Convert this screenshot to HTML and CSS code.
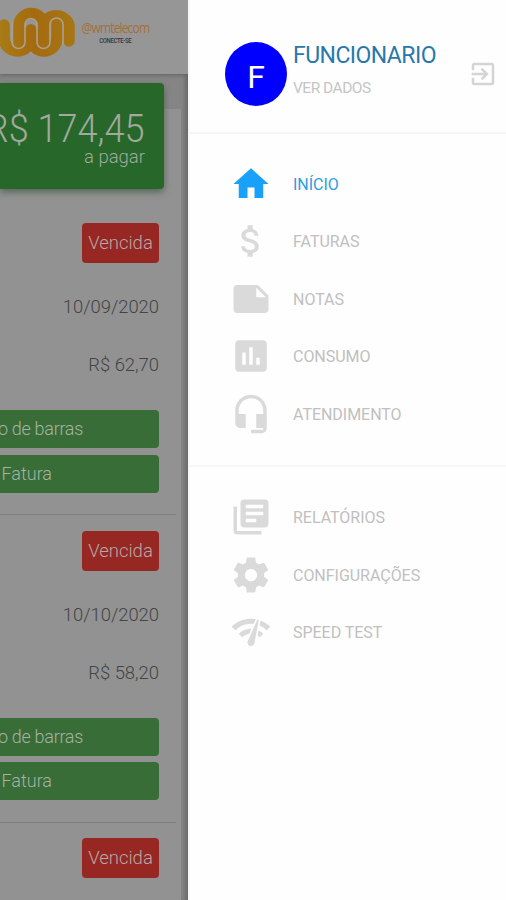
FILE: index.html
```
<!DOCTYPE html>
<html lang="pt-BR">
<head>
<meta charset="utf-8">
<meta name="viewport" content="width=device-width, initial-scale=1">
<title>Central do Assinante</title>
<link rel="stylesheet" href="styles.css">
</head>
<body>
<div class="app">
  <div class="page">
    <header class="topbar">
      <svg class="logo" viewBox="0 0 76 60">
        <defs>
          <linearGradient id="gold" gradientUnits="userSpaceOnUse" x1="0" y1="0" x2="76" y2="0"><stop offset="0" stop-color="#a77b15"/><stop offset=".45" stop-color="#a56a10"/><stop offset="1" stop-color="#a77714"/></linearGradient>
        </defs>
        <g fill="none" stroke-linecap="round">
          <path class="thick" d="M4 25V38A13.500 13 0 0 0 31 38V30"/>
          <path class="thick" d="M31 30V38A13 13 0 0 0 57 38V25"/>
          <path class="thick" d="M43.500 42V25.500A13 12 0 0 1 69 25.500V41"/>
          <path class="thick" d="M19 42V25.500A12.250 12 0 0 1 43.500 25.500V42"/>
          <path class="groove" d="M12 22V42A6.500 6.500 0 0 0 25 42V24.500A6 6 0 0 1 37 24.500V42A6.500 6.500 0 0 0 50 42V24.500A6.500 6.500 0 0 1 63 24.500V44"/>
        </g>
      </svg>
      <div class="brand"><span class="brand-name">@wmtelecom</span><span class="brand-tag">CONECTE-SE</span></div>
    </header>
    <section class="total"><strong>R$ 174,45</strong><span>a pagar</span></section>
    <main class="invoices">
      <article class="invoice">
        <span class="status">Vencida</span><span class="date">10/09/2020</span><span class="amount">R$ 62,70</span>
        <div class="action">Código de barras</div><div class="action bill">Fatura</div>
      </article>
      <article class="invoice">
        <span class="status">Vencida</span><span class="date">10/10/2020</span><span class="amount">R$ 58,20</span>
        <div class="action">Código de barras</div><div class="action bill">Fatura</div>
      </article>
      <article class="invoice"><span class="status">Vencida</span></article>
    </main>
  </div>
  <aside class="drawer">
    <header class="profile">
      <div class="avatar">F</div>
      <div class="who"><span class="name">FUNCIONARIO</span><span class="details">VER DADOS</span></div>
      <svg class="exit" viewBox="0 0 24 24"><path d="M10.090 15.590L11.500 17l5-5-5-5-1.410 1.410L12.670 11H3v2h9.670l-2.580 2.590zM19 3H5c-1.110 0-2 .9-2 2v4h2V5h14v14H5v-4H3v4c0 1.100.890 2 2 2h14c1.100 0 2-.9 2-2V5c0-1.100-.9-2-2-2z"/></svg>
    </header>
    <nav class="menu main-menu">
      <a class="item active"><svg viewBox="0 0 24 24"><path d="M10 20v-6h4v6h5v-8h3L12 3 2 12h3v8z"/></svg><span>INÍCIO</span></a>
      <a class="item"><svg viewBox="0 0 24 24"><path d="M11.800 10.900c-2.270-.59-3-1.200-3-2.150 0-1.090 1.010-1.850 2.700-1.850 1.780 0 2.440.85 2.500 2.100h2.210c-.07-1.720-1.120-3.300-3.210-3.810V3h-3v2.160c-1.940.42-3.500 1.680-3.500 3.610 0 2.310 1.910 3.460 4.700 4.130 2.500.6 3 1.480 3 2.410 0 .69-.49 1.790-2.700 1.790-2.060 0-2.870-.92-2.980-2.100h-2.200c.12 2.190 1.760 3.420 3.680 3.830V21h3v-2.150c1.950-.37 3.500-1.500 3.500-3.550 0-2.840-2.430-3.810-4.700-4.400z"/></svg><span>FATURAS</span></a>
      <a class="item"><svg viewBox="0 0 24 24"><path d="M22 10l-6-6H4c-1.100 0-2 .9-2 2v12.010c0 1.100.9 1.990 2 1.990l16-.01c1.100 0 2-.89 2-1.990v-8zm-7-4.500l5.500 5.500H15V5.500z"/></svg><span>NOTAS</span></a>
      <a class="item"><svg viewBox="0 0 24 24"><path d="M19 3H5c-1.100 0-2 .9-2 2v14c0 1.100.9 2 2 2h14c1.100 0 2-.9 2-2V5c0-1.100-.9-2-2-2zM9 17H7v-7h2v7zm4 0h-2V7h2v10zm4 0h-2v-4h2v4z"/></svg><span>CONSUMO</span></a>
      <a class="item"><svg viewBox="0 0 24 24"><path d="M12 1c-4.970 0-9 4.030-9 9v7c0 1.660 1.340 3 3 3h3v-8H5v-2c0-3.870 3.130-7 7-7s7 3.130 7 7v2h-4v8h4v1h-7v2h6c1.660 0 3-1.340 3-3V10c0-4.970-4.030-9-9-9z"/></svg><span>ATENDIMENTO</span></a>
    </nav>
    <nav class="menu tools-menu">
      <a class="item"><svg viewBox="0 0 24 24"><path d="M4 6H2v14c0 1.100.9 2 2 2h14v-2H4V6zm16-4H8c-1.100 0-2 .9-2 2v12c0 1.100.9 2 2 2h12c1.100 0 2-.9 2-2V4c0-1.100-.9-2-2-2zm-1 9H9V9h10v2zm-4 4H9v-2h6v2zm4-8H9V5h10v2z"/></svg><span>RELATÓRIOS</span></a>
      <a class="item"><svg viewBox="0 0 24 24"><path d="M19.430 12.980c.04-.32.07-.64.07-.98s-.03-.66-.07-.98l2.110-1.650c.19-.15.24-.42.12-.64l-2-3.460c-.12-.22-.39-.3-.61-.22l-2.490 1c-.52-.4-1.080-.73-1.690-.98l-.38-2.650C14.460 2.180 14.250 2 14 2h-4c-.25 0-.46.18-.49.42l-.38 2.650c-.61.25-1.170.59-1.690.98l-2.490-1c-.23-.09-.49 0-.61.22l-2 3.460c-.13.22-.07.49.12.64l2.110 1.650c-.04.32-.07.65-.07.98s.03.66.07.98l-2.110 1.650c-.19.15-.24.42-.12.64l2 3.460c.12.22.39.3.61.22l2.490-1c.52.4 1.080.73 1.690.98l.38 2.650c.03.24.24.42.49.42h4c.25 0 .46-.18.49-.42l.38-2.650c.61-.25 1.170-.59 1.690-.98l2.490 1c.23.09.49 0 .61-.22l2-3.460c.12-.22.07-.49-.12-.64l-2.110-1.650zM12 15.500c-1.930 0-3.500-1.570-3.500-3.500s1.570-3.500 3.500-3.500 3.500 1.570 3.500 3.500-1.570 3.500-3.500 3.500z"/></svg><span>CONFIGURAÇÕES</span></a>
      <a class="item"><svg viewBox="0 0 24 24"><path d="M15.900 5c-.17 0-.32.09-.41.23l-.07.15-5.180 11.650c-.16.29-.26.61-.26.96 0 1.110.9 2.010 2.010 2.010.96 0 1.770-.68 1.960-1.590l.01-.03L16.400 5.500c0-.28-.22-.5-.5-.5zM1 9l2 2c2.880-2.880 6.790-4.080 10.530-3.620l1.190-2.680C9.890 3.840 4.740 5.270 1 9zm20 2l2-2c-1.640-1.640-3.550-2.820-5.590-3.570l-.53 2.820c1.500.62 2.900 1.530 4.120 2.750zm-4 4l2-2c-.8-.8-1.700-1.420-2.660-1.890l-.55 2.920c.42.27.83.59 1.210.97zM5 13l2 2c1.130-1.130 2.560-1.790 4.030-2l1.280-2.880c-2.630-.08-5.300.87-7.310 2.880z"/></svg><span>SPEED TEST</span></a>
    </nav>
  </aside>
</div>
</body>
</html>
```
FILE: styles.css
```
* { box-sizing: border-box; }
body { margin: 0; font-family: Roboto, "Liberation Sans", sans-serif; }
.app { display: grid; grid-template-columns: 188px 1fr; height: 900px; overflow: hidden; }
.page { background: #858585; overflow: hidden; height: 900px; box-shadow: inset -5px 0 4px -2px #686868; }
.topbar { height: 74px; background: #969696; display: flex; box-shadow: 0 1px 4px #606060; }
.logo { width: 76px; height: 60px; flex: none; }
.thick { stroke: url(#gold); stroke-width: 11.500; }
.groove { stroke: #aaa08c; stroke-width: 1.600; }
.brand { display: flex; flex-direction: column; align-items: center; width: 66px; margin: 20px 0 0 6px; }
.brand-name { font: 14px/16px "Open Sans", sans-serif; letter-spacing: -1px; color: #a46f3a; transform: scaleX(.86); }
.brand-tag { font-size: 8px; line-height: 9px; color: #343840; font-weight: 500; letter-spacing: -.5px; transform: scaleX(.75); }
.total { position: relative; z-index: 1; margin-top: 9px; width: 164px; height: 106px; border-radius: 0 4px 4px 0; background: #28672a; color: #a0aa9f; display: flex; flex-direction: column; align-items: flex-end; padding: 26px 19px 0 0; box-shadow: 0 3px 7px #566456; }
.total strong { font-size: 39px; line-height: 40px; font-weight: 300; white-space: nowrap; transform: scaleX(.925); transform-origin: right; }
.total span { font-size: 18.500px; line-height: 17px; font-weight: 300; }
.invoices { width: 181px; margin-top: -80px; padding-top: 114px; height: 791px; background: #929292; }
.invoice { display: flex; flex-direction: column; align-items: flex-end; width: 176px; height: 292px; padding-right: 17px; border-bottom: 1px solid #7e7e7e; margin-bottom: 15.500px; }
.status { width: 77px; height: 40px; border-radius: 4px; background: #962722; color: #b8a8a6; font-size: 18.500px; font-weight: 300; line-height: 41px; text-align: center; flex: none; }
.date, .amount { color: #444; font-size: 18.400px; font-weight: 300; line-height: 24px; }
.date { margin-top: 32px; }
.amount { margin-top: 34px; }
.action { width: 159px; height: 38px; flex: none; border-radius: 0 4px 4px 0; background: #386d38; color: #a6b2a3; margin-top: 33px; font-size: 18px; font-weight: 300; line-height: 37px; letter-spacing: -.3px; white-space: nowrap; padding-right: 76px; display: flex; justify-content: flex-end; }
.action + .action { margin-top: 6.500px; padding-right: 107px; letter-spacing: 0; }
.drawer { background: #fefefe; border-left: 2px solid #f7f7f7; }
.profile { display: flex; height: 133.500px; border-bottom: 2px solid #f5f5f5; padding-left: 35px; }
.avatar { width: 62px; height: 64px; border-radius: 50%; background: #00f; color: #fff; font-size: 32px; line-height: 70px; text-align: center; margin-top: 42px; }
.who { display: flex; flex-direction: column; width: 181px; padding: 42px 0 0 6px; }
.name { font-size: 23px; line-height: 27px; color: #2878ac; letter-spacing: -.55px; }
.details { font-size: 15.500px; line-height: 20px; margin-top: 9px; color: #c5c5c5; letter-spacing: -.5px; }
.exit { width: 30px; height: 30px; margin-top: 59px; fill: #d4d4d4; }
.menu { display: flex; flex-direction: column; }
.main-menu { height: 333.500px; padding-top: 21.500px; border-bottom: 2px solid #f7f7f7; }
.tools-menu { padding-top: 21.500px; }
.item { display: flex; align-items: center; height: 57.500px; padding-left: 39.500px; gap: 21.500px; color: #c0c0c0; font-size: 16px; letter-spacing: -.03px; }
.item span { padding-top: 1px; }
.item svg { width: 42px; height: 42px; fill: #dadada; }
.active { color: #2c9ddc; }
.active svg { fill: #18a0fb; }
```
